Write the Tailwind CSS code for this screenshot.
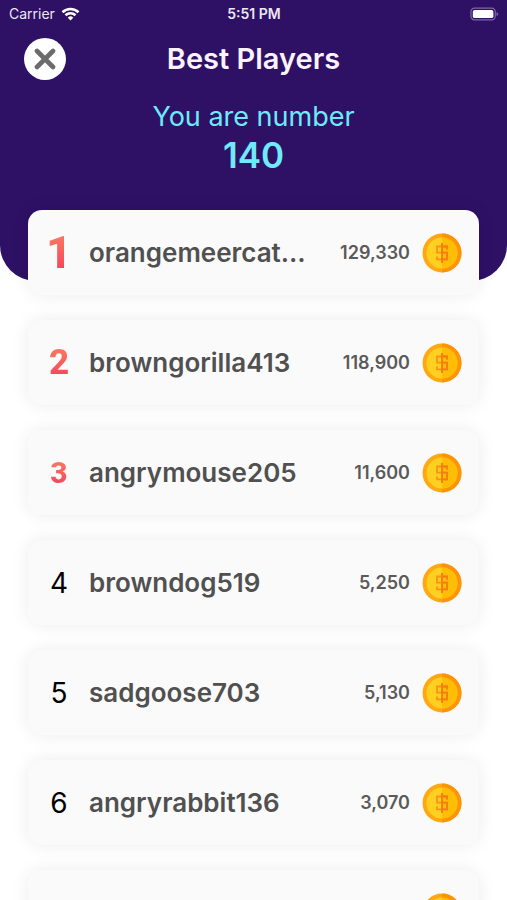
<!DOCTYPE html>
<html lang="en">
<head>
<meta charset="utf-8">
<meta name="viewport" content="width=device-width, initial-scale=1">
<title>Best Players</title>
<script src="https://cdn.jsdelivr.net/npm/@tailwindcss/browser@4"></script>
</head>
<body class="h-screen overflow-hidden bg-white font-['Inter',sans-serif]">
<svg class="hidden" aria-hidden="true">
  <symbol id="coin" viewBox="0 0 40 40">
    <circle cx="20" cy="20" r="19.500" fill="#ffa814"/>
    <path d="M20 .5a19.500 19.500 0 0 1 0 39z" fill="#ff9305"/>
    <circle cx="20" cy="20" r="15.500" fill="#ffd01f"/>
    <path d="M20 4.500a15.500 15.500 0 0 1 0 31z" fill="#ffbd05"/>
    <path d="M20 10v20M25 16.500V13.500H15V19.700H25V26.300H15V23.500" fill="none" stroke="#fb9214" stroke-width="1.800"/>
    <path d="M20 10v20M20 13.500h5v3M20 19.700h5v6.600h-5" fill="none" stroke="#f47d10" stroke-width="1.800"/>
  </symbol>
</svg>
<header class="h-[281px] rounded-b-[36px] bg-[#2e1065] text-white">
  <div class="grid h-7 grid-cols-3 items-center pr-2 pl-[9px] text-[14px] leading-5 text-[#ece6f6]">
    <div class="flex items-center gap-1.5">
      <span>Carrier</span>
      <svg class="h-[14px] w-[19px]" viewBox="0 0 18 14" fill="none" stroke="#fff" stroke-width="2.600" aria-label="Wi-Fi">
        <path d="M1 5.200a11.500 11.500 0 0 1 16 0M4 8.300a7.200 7.200 0 0 1 10 0"/>
        <path d="M9 13.500 6.200 10.700a4 4 0 0 1 5.600 0z" fill="#fff" stroke="none"/>
      </svg>
    </div>
    <time class="text-center font-semibold">5:51 PM</time>
    <svg class="h-[14px] w-[29px] justify-self-end" viewBox="0 0 31 14" aria-label="Battery full">
      <rect x="1" y=".8" width="26" height="12.400" rx="3.800" fill="none" stroke="#7d68a4" stroke-width="1.300"/>
      <rect x="3" y="2.700" width="22" height="8.600" rx="2" fill="#fff"/>
      <path d="M28.300 4.800q2 .8 2 2.200t-2 2.200z" fill="#7d68a4"/>
    </svg>
  </div>
  <div class="grid grid-cols-[42px_1fr_42px] items-center px-6 pt-2.5">
    <button type="button" aria-label="Close" class="flex size-[42px] items-center justify-center rounded-full bg-white">
      <svg class="size-[22px]" viewBox="0 0 22 22" stroke="#6b6b6b" stroke-width="4.600" stroke-linecap="round"><path d="m3 3 16 16M19 3 3 19"/></svg>
    </button>
    <h1 class="text-center text-[29px] leading-9 font-semibold text-[#fbf3ff]">Best Players</h1>
  </div>
  <p class="pt-[19px] text-center text-[27px] leading-9 text-[#6eeafa]">You are number<strong class="block pt-0.5 text-[35px] font-semibold">140</strong></p>
</header>
<main class="relative -mt-[71px] px-7">
  <ol class="flex flex-col gap-[25px] [&>li]:flex [&>li]:h-[85px] [&>li]:items-center [&>li]:rounded-[14px] [&>li]:bg-[#fafafa] [&>li]:pr-[17px] [&>li]:pl-4 [&>li]:shadow-[0_0_18px_rgba(0,0,0,0.08)] [&_h2]:min-w-0 [&_h2]:flex-1 [&_h2]:truncate [&_h2]:text-[26px] [&_h2]:leading-9 [&_h2]:font-semibold [&_h2]:text-[#505050] [&_data]:mr-3 [&_data]:text-right [&_data]:text-[18px] [&_data]:font-semibold [&_data]:text-[#5a5a5a] [&_svg]:size-10 [&_svg]:shrink-0">
    <li>
      <span class="mr-[15px] w-[30px] shrink-0 bg-linear-to-b from-[#fa7d62] to-[#f5385a] bg-clip-text text-center font-['Roboto',sans-serif] text-[45px] leading-[45px] font-extrabold text-transparent">1</span>
      <h2>orangemeercat…</h2><data value="129330">129,330</data><svg><use href="#coin"/></svg>
    </li>
    <li>
      <span class="mr-[15px] w-[30px] shrink-0 bg-linear-to-b from-[#fa7d62] to-[#f5385a] bg-clip-text text-center font-['Roboto',sans-serif] text-[35px] leading-9 font-extrabold text-transparent">2</span>
      <h2>browngorilla413</h2><data value="118900">118,900</data><svg><use href="#coin"/></svg>
    </li>
    <li>
      <span class="mr-[15px] w-[30px] shrink-0 bg-linear-to-b from-[#fa7d62] to-[#f5385a] bg-clip-text text-center font-['Roboto',sans-serif] text-[30px] leading-[30px] font-extrabold text-transparent">3</span>
      <h2>angrymouse205</h2><data value="11600">11,600</data><svg><use href="#coin"/></svg>
    </li>
    <li>
      <span class="mr-[15px] w-[30px] shrink-0 text-center text-[28px] leading-9 text-black">4</span>
      <h2>browndog519</h2><data value="5250">5,250</data><svg><use href="#coin"/></svg>
    </li>
    <li>
      <span class="mr-[15px] w-[30px] shrink-0 text-center text-[28px] leading-9 text-black">5</span>
      <h2>sadgoose703</h2><data value="5130">5,130</data><svg><use href="#coin"/></svg>
    </li>
    <li>
      <span class="mr-[15px] w-[30px] shrink-0 text-center text-[28px] leading-9 text-black">6</span>
      <h2>angryrabbit136</h2><data value="3070">3,070</data><svg><use href="#coin"/></svg>
    </li>
    <li class="justify-end"><svg><use href="#coin"/></svg></li>
  </ol>
</main>
</body>
</html>
